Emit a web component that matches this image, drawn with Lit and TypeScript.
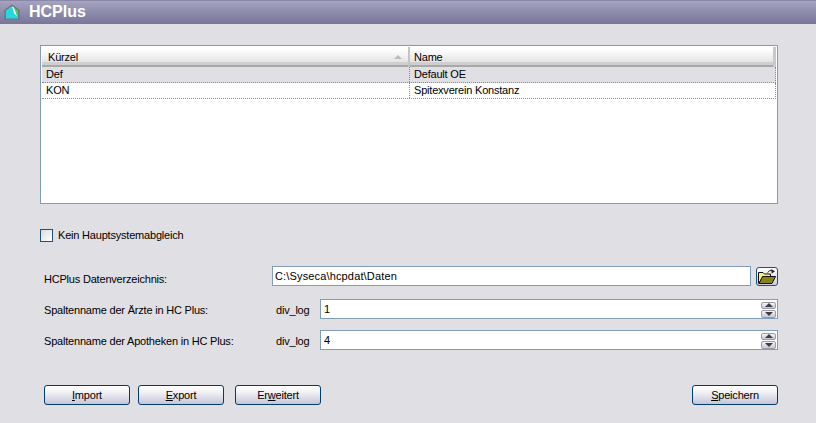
import { LitElement, html, css, svg } from "lit";
import { customElement } from "lit/decorators.js";

const folder = svg`<svg width="20" height="16" viewBox="0 0 20 16">
  <path d="M10.5 3.5 Q12.5 0.8 15.5 1.5" fill="none" stroke="#222" stroke-width="1"/>
  <path d="M14.5 0 L18 2.5 L14.5 4.5 Z" fill="#222"/>
  <path d="M1.5 3.5 H6 L7.5 5 H13.5 V7.5 H6 L2 14 H1.5 Z" fill="#fbf27a" stroke="#111"/>
  <path d="M2 14.5 L5.5 7.5 H18.5 L15 14.5 Z" fill="#8a8414" stroke="#111"/>
</svg>`;

@customElement("app-root")
export class AppRoot extends LitElement {
  static styles = css`
    :host { display: block; width: 816px; height: 423px; overflow: hidden; background: #e0dfe3;
      font: 11px "Liberation Sans", Arial, sans-serif; letter-spacing: -0.2px; color: #000; }
    .title { height: 24px; box-sizing: border-box; border-top: 1px solid #8a88a8; display: flex; align-items: center; gap: 9px; padding: 0 0 1px 4px;
      background: linear-gradient(#a5a3bf, #77759a); color: #fff; font: bold 16px "Liberation Sans", sans-serif; letter-spacing: 0; }
    .title svg { display: block; }
    .main { padding: 21px 38px 0 40px; display: flex; flex-direction: column; }
    .list { height: 159px; box-sizing: border-box; border: 1px solid #7f9db9; background: #fff; padding: 1px 0 0 1px; }
    .head { display: grid; grid-template-columns: 366px 1fr; height: 20px; box-sizing: border-box; margin-right: 1px;
      background: linear-gradient(#fff 10%, #e4e4e4 75%, #cfcfcf 75%, #cfcfcf 90%, #a9a8a8 90%); }
    .hc { display: flex; align-items: center; justify-content: space-between; padding: 1px 6px 1px 6px; box-sizing: border-box; }
    .hc + .hc { border-left: 2px solid #c4c4c4; border-right: 3px solid #c8c8c8; padding-left: 4px; }
    .arrow { width: 0; height: 0; border: 4px solid transparent; border-top: 0; border-bottom: 4px solid #bbb; margin-bottom: 1px; }
    .row { display: grid; grid-template-columns: 367px 1fr; height: 16px; box-sizing: border-box; border-bottom: 1px dotted #888; margin-right: 1px; border-right: 1px dotted #888; }
    .row.sel { background: #e0dfe3; }
    .row div { padding-left: 4px; line-height: 15px; }
    .row div + div { border-left: 1px dotted #888; }
    .check { display: flex; align-items: flex-start; gap: 5px; margin-top: 25px; height: 13px; }
    .check .txt { line-height: 13px; }
    .box { width: 13px; height: 13px; box-sizing: border-box; border: 1px solid #1c5180; background: linear-gradient(135deg, #dcdcd7, #fff); }
    .form { display: grid; grid-template-columns: 232px 44px 1fr; row-gap: 11px; margin-top: 24px; padding-left: 4px; align-items: center; }
    .inp { height: 20px; box-sizing: border-box; border: 1px solid #7f9db9; background: #fff; padding-left: 3px; line-height: 18px; display: flex; align-items: center; justify-content: space-between; }
    .pathrow { grid-column: 2 / 4; display: flex; gap: 5px; margin: 0 0 2px -4px; }
    .pathrow .inp { flex: 1; letter-spacing: 0.15px; padding-left: 2px; }
    .lbl { position: relative; top: 1px; }
    .first { top: 2px; }
    .fbtn { width: 22px; height: 19px; box-sizing: border-box; margin-top: 1px; border: 1px solid #1c5180; border-radius: 3px; background: linear-gradient(#fff, #cfcfdc); display: flex; align-items: center; justify-content: center; padding: 0; }
    .spin { display: flex; flex-direction: column; gap: 1px; margin: 1px 1px 0 0; }
    .sb { width: 15px; height: 8px; box-sizing: border-box; border: 1px solid #9a9aa8; border-radius: 2px; background: linear-gradient(#f4f4f8, #c8c8d6); display: flex; align-items: center; justify-content: center; }
    .sb:first-child { height: 7px; }
    .up { width: 0; height: 0; border: 4px solid transparent; border-top: 0; border-bottom: 4px solid #3c3c48; }
    .dn { width: 0; height: 0; border: 4px solid transparent; border-bottom: 0; border-top: 4px solid #3c3c48; }
    .btns { display: flex; margin-top: 35px; padding-left: 4px; gap: 8px; }
    .btn { width: 86px; height: 20px; box-sizing: border-box; border: 1px solid #003c74; border-radius: 3px; background: linear-gradient(#fff, #f4f4f8 30%, #c6c5d7); font: inherit; letter-spacing: inherit; padding: 0; text-align: center; color: #000; }
    .gap3 { margin-left: 3px; }
    .push { margin-left: auto; }
  `;

  render() {
    return html`
      <div class="title">
        <svg width="16" height="16" viewBox="0 0 16 16">
          <path d="M0.3 15.8 V6 L8 0.2 L15.7 6 V15.8 Z" fill="#77757e"/>
          <path d="M2 14.5 V6.5 L7.5 2.2 L14 7 V14.5 Z" fill="#27d6de"/>
          <path d="M8 2.5 L10 3.6 L13 12.5 L10 9 Z" fill="#fff"/>
          <path d="M11 4.6 L14 7 V11.5 L12.3 10 Z" fill="#2ee048"/>
        </svg>
        <span>HCPlus</span>
      </div>
      <div class="main">
        <div class="list">
          <div class="head">
            <div class="hc"><span>Kürzel</span><span class="arrow"></span></div>
            <div class="hc"><span>Name</span></div>
          </div>
          <div class="row sel"><div>Def</div><div>Default OE</div></div>
          <div class="row"><div>KON</div><div>Spitexverein Konstanz</div></div>
        </div>
        <div class="check"><span class="box"></span><span class="txt">Kein Hauptsystemabgleich</span></div>
        <div class="form">
          <div class="lbl first">HCPlus Datenverzeichnis:</div>
          <div class="pathrow">
            <div class="inp">C:\\Syseca\\hcpdat\\Daten</div>
            <button class="fbtn">${folder}</button>
          </div>
          <div class="lbl">Spaltenname der Ärzte in HC Plus:</div>
          <div class="lbl">div_log</div>
          <div class="inp">1<span class="spin"><span class="sb"><span class="up"></span></span><span class="sb"><span class="dn"></span></span></span></div>
          <div class="lbl">Spaltenname der Apotheken in HC Plus:</div>
          <div class="lbl">div_log</div>
          <div class="inp">4<span class="spin"><span class="sb"><span class="up"></span></span><span class="sb"><span class="dn"></span></span></span></div>
        </div>
        <div class="btns">
          <button class="btn"><u>I</u>mport</button>
          <button class="btn"><u>E</u>xport</button>
          <button class="btn gap3">Er<u>w</u>eitert</button>
          <button class="btn push"><u>S</u>peichern</button>
        </div>
      </div>
    `;
  }
}
